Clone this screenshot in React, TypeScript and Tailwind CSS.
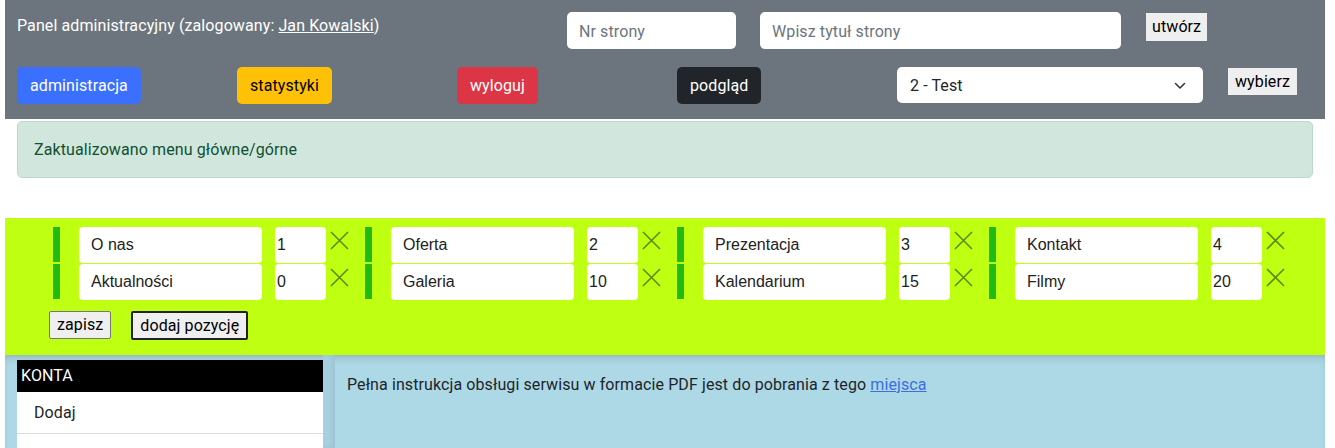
import React from 'react';

const groups = [
  [
    { name: 'O nas', pos: '1' },
    { name: 'Oferta', pos: '2' },
    { name: 'Prezentacja', pos: '3' },
    { name: 'Kontakt', pos: '4' },
  ],
  [
    { name: 'Aktualności', pos: '0' },
    { name: 'Galeria', pos: '10' },
    { name: 'Kalendarium', pos: '15' },
    { name: 'Filmy', pos: '20' },
  ],
];

const Cross = () => (
  <svg width="19" height="19" viewBox="0 0 19 19" className="shrink-0">
    <path d="M1 1 L18 18 M18 1 L1 18" stroke="#5b8a10" strokeWidth="1.6" fill="none" />
  </svg>
);

const MenuItem = ({ name, pos }: { name: string; pos: string }) => (
  <div className="w-[312px] flex items-start">
    <div className="w-[7px] h-[35px] bg-[#22bb11]" />
    <input
      defaultValue={name}
      className="ml-[19px] w-[183px] h-[36px] bg-white rounded-[4px] px-[12px] text-[16px] tracking-normal text-[#222] outline-none font-['Liberation_Sans',sans-serif]"
    />
    <input
      defaultValue={pos}
      className="ml-[13px] w-[51px] h-[36px] bg-white rounded-[4px] px-[2px] text-[16px] tracking-normal text-[#222] outline-none font-['Liberation_Sans',sans-serif]"
    />
    <div className="ml-[4px] mt-[4px]">
      <Cross />
    </div>
  </div>
);

export default function App() {
  return (
    <div className="w-[1320px] ml-[5px] font-['Roboto',sans-serif] text-[16px] tracking-[0.1px] text-[#212529]">
      {/* header */}
      <div className="bg-[#6c757d] h-[119px] px-[12px] pt-[12px]">
        <div className="flex items-start">
          <div className="w-[550px] pt-[2px] text-white leading-[24px]">
            Panel administracyjny (zalogowany: <a className="underline">Jan Kowalski</a>)
          </div>
          <input
            placeholder="Nr strony"
            className="w-[169px] h-[37px] bg-white rounded-[5px] px-[12px] pt-[1px] placeholder:text-[#6c757d] outline-none"
          />
          <input
            placeholder="Wpisz tytuł strony"
            className="ml-[24px] w-[361px] h-[37px] bg-white rounded-[5px] px-[12px] pt-[1px] placeholder:text-[#6c757d] outline-none"
          />
          <button className="ml-[25px] mt-[1px] h-[28px] px-[6px] bg-[#efefef] text-black">utwórz</button>
        </div>
        <div className="flex items-start mt-[18px]">
          <div className="w-[220px]">
            <button className="h-[37px] px-[13px] rounded-[5px] bg-[#3b6ffd] text-white">administracja</button>
          </div>
          <div className="w-[220px]">
            <button className="h-[37px] px-[13px] rounded-[5px] bg-[#ffc107] text-black">statystyki</button>
          </div>
          <div className="w-[220px]">
            <button className="h-[37px] px-[13px] rounded-[5px] bg-[#dc3545] text-white">wyloguj</button>
          </div>
          <div className="w-[220px]">
            <button className="h-[37px] px-[13px] rounded-[5px] bg-[#212529] text-white">podgląd</button>
          </div>
          <div className="w-[306px] h-[36px] bg-white rounded-[5px] flex items-center justify-between pl-[13px] pr-[17px] pt-[1px]">
            <span>2 - Test</span>
            <svg width="12" height="8" viewBox="0 0 12 8">
              <path d="M1.5 1.5 L6 6 L10.5 1.5" stroke="#343a40" strokeWidth="1.6" fill="none" strokeLinecap="round" strokeLinejoin="round" />
            </svg>
          </div>
          <button className="ml-[25px] mt-[1px] h-[27px] px-[7px] bg-[#efefef] text-black">wybierz</button>
        </div>
      </div>

      {/* alert */}
      <div className="mt-[2px] mx-[12px] h-[57px] bg-[#d1e7dd] border border-[#badbcc] rounded-[5px] px-[16px] flex items-center text-[#0f5132]">
        Zaktualizowano menu główne/górne
      </div>

      {/* menu editor */}
      <div className="mt-[40px] h-[137px] bg-[#bfff11] pt-[9px] pl-[48px]">
        {groups.map((row, i) => (
          <div key={i} className="flex h-[37px]">
            {row.map((it) => (
              <MenuItem key={it.name} name={it.name} pos={it.pos} />
            ))}
          </div>
        ))}
        <div className="flex items-start mt-[10px] -ml-[4px]">
          <button className="h-[28px] px-[7px] bg-[#efefef] border border-[#767676] rounded-[2px] text-black">zapisz</button>
          <button className="ml-[20px] h-[29px] px-[7px] bg-[#efefef] border-2 border-[#222] rounded-[2px] text-black">dodaj pozycję</button>
        </div>
      </div>

      {/* bottom area */}
      <div className="h-[93px] bg-[#add8e6] shadow-[inset_0_6px_8px_-4px_rgba(0,0,0,0.18)] flex items-start pl-[12px] pt-[5px]">
        <div className="w-[306px] bg-white">
          <div className="h-[32px] bg-black text-white flex items-center px-[4px]">KONTA</div>
          <div className="h-[42px] flex items-center px-[17px] border-b border-[#dcdcdc]">Dodaj</div>
          <div className="h-[20px]" />
        </div>
        <div className="w-[12px] self-stretch -mt-[5px] bg-[#a6d0df] shadow-[inset_-3px_0_4px_rgba(0,0,0,0.06)]" />
        <div className="flex-1 pl-[12px] pt-[13px] leading-[24px]">
          Pełna instrukcja obsługi serwisu w formacie PDF jest do pobrania z tego{' '}
          <a className="underline text-[#3b6fe0]">miejsca</a>
        </div>
      </div>
    </div>
  );
}
